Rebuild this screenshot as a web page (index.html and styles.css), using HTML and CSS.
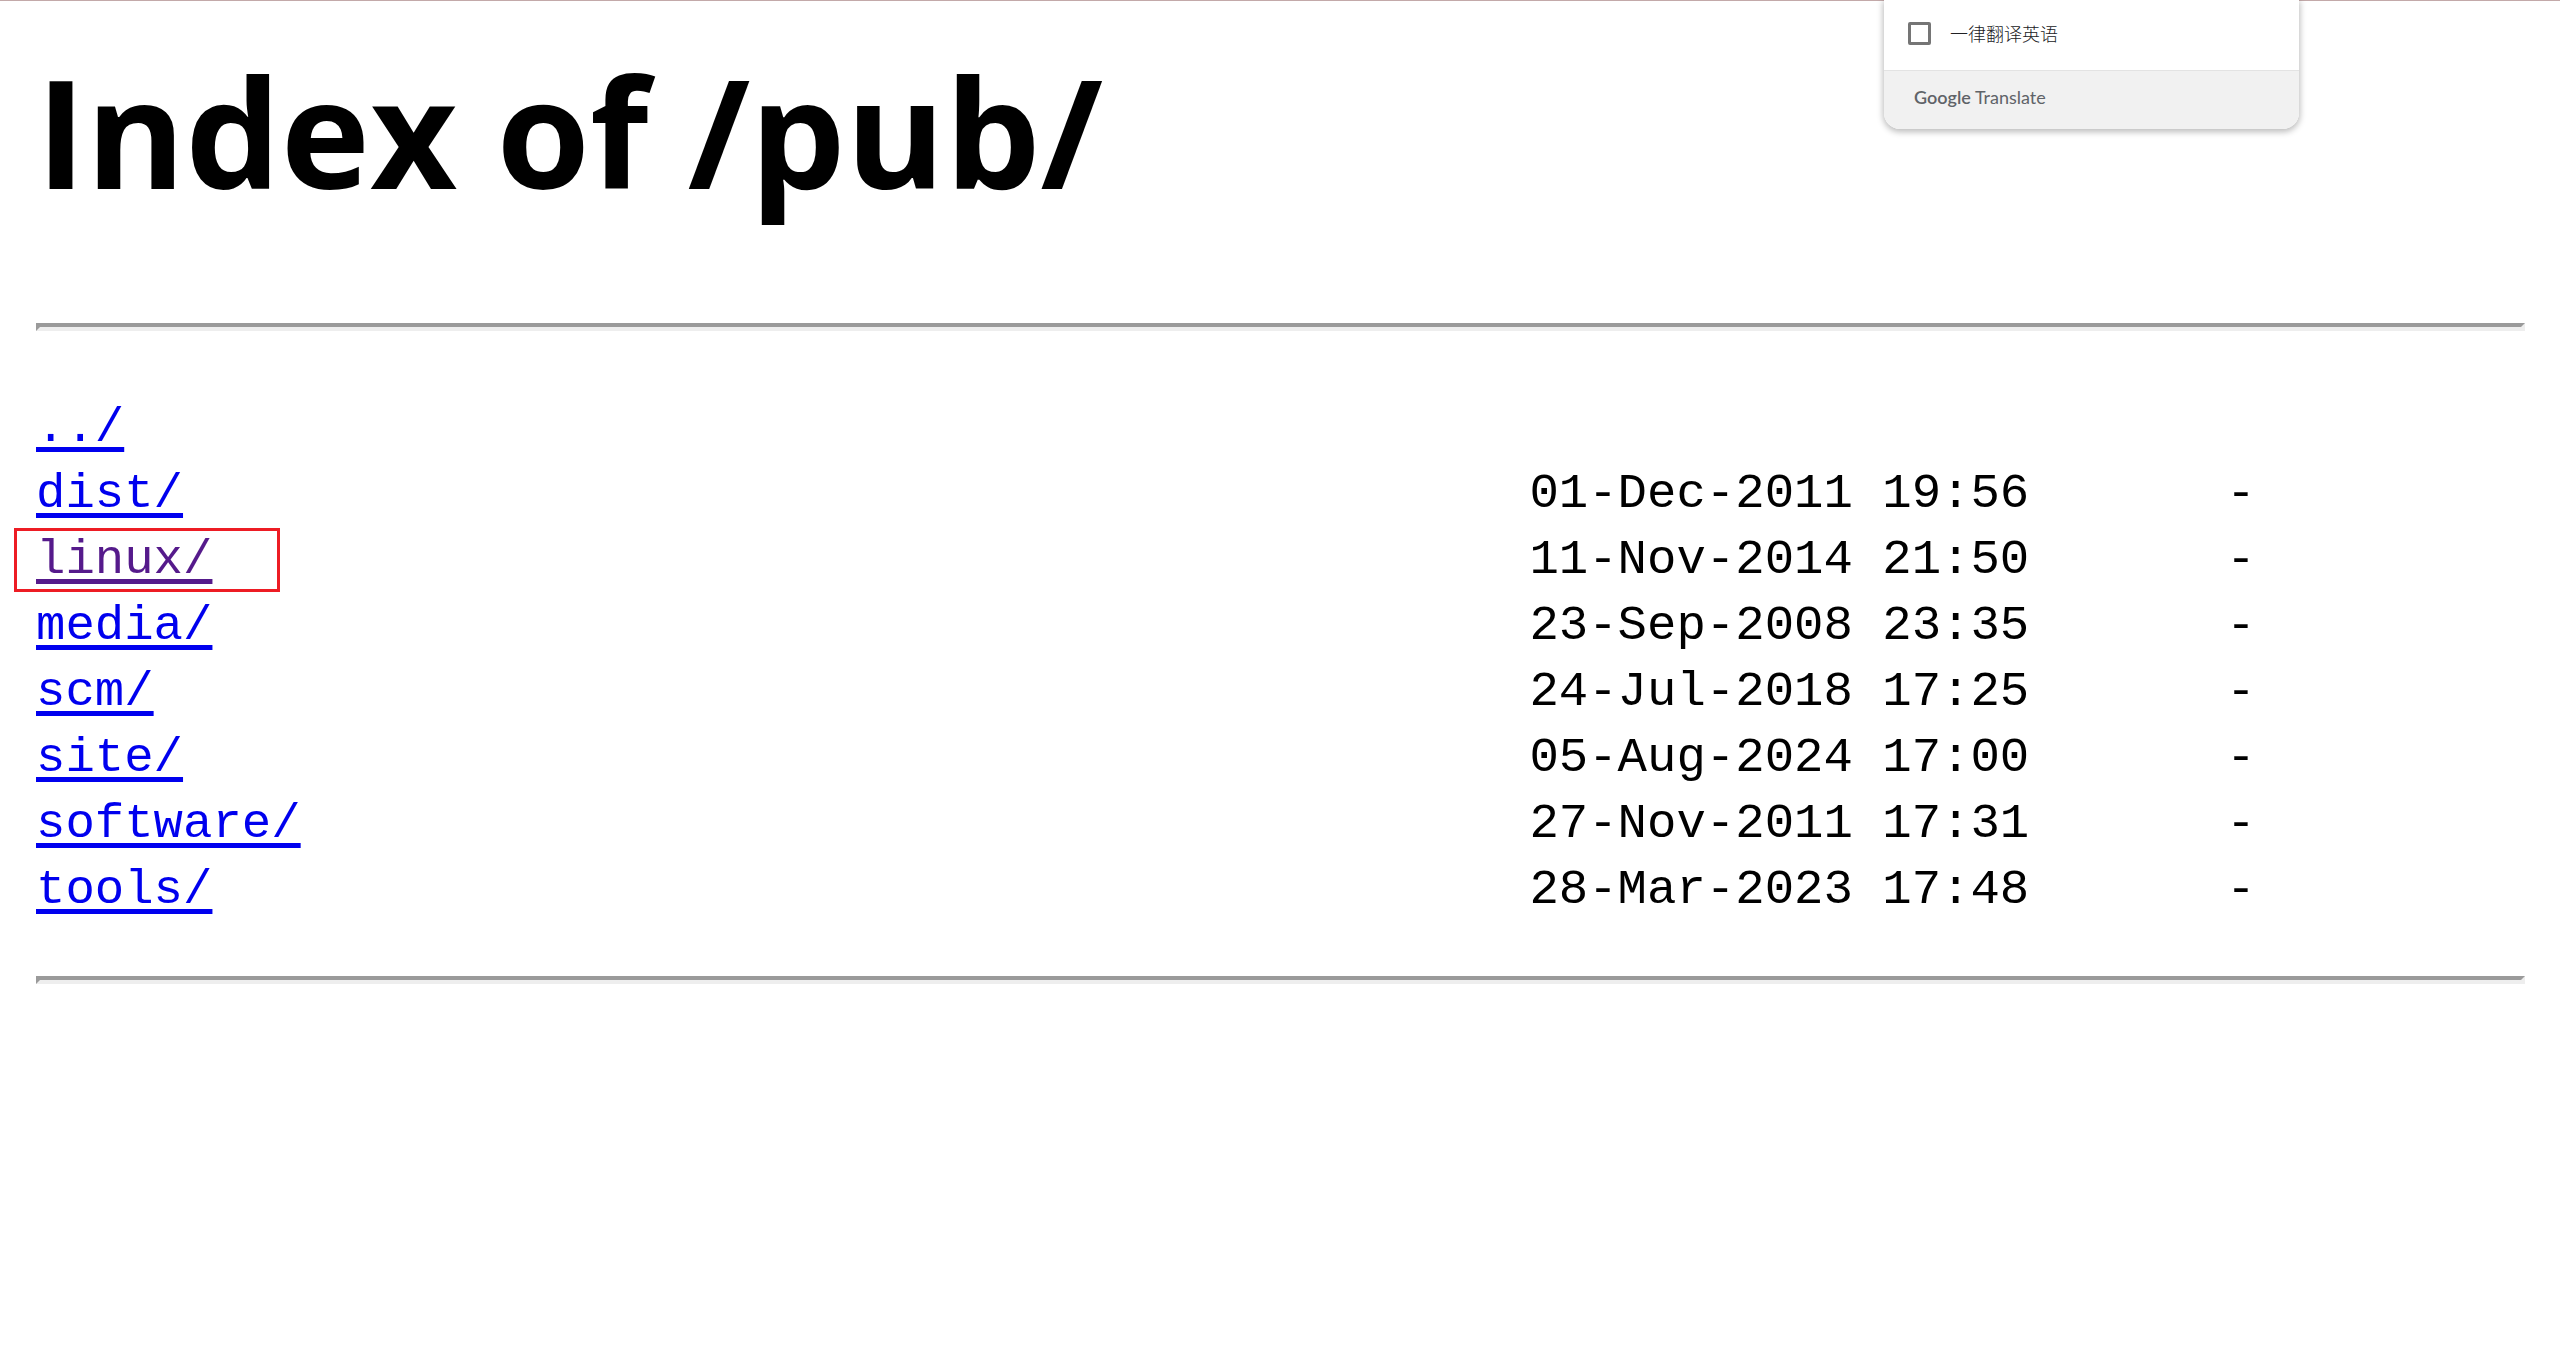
FILE: index.html
```html
<!DOCTYPE html>
<html lang="en">
<head>
<meta charset="utf-8">
<title>Index of /pub/</title>
<link rel="stylesheet" href="styles.css">
</head>
<body>
<main>
<h1>Index of /pub/</h1>
<hr>
<table class="listing">
<colgroup><col class="col-name"><col class="col-date"><col></colgroup>
<tbody>
<tr><td><a href="../">../</a></td><td></td><td></td></tr>
<tr><td><a href="dist/">dist/</a></td><td>01-Dec-2011 19:56</td><td>-</td></tr>
<tr><td><span class="marked"><a class="visited" href="linux/">linux/</a></span></td><td>11-Nov-2014 21:50</td><td>-</td></tr>
<tr><td><a href="media/">media/</a></td><td>23-Sep-2008 23:35</td><td>-</td></tr>
<tr><td><a href="scm/">scm/</a></td><td>24-Jul-2018 17:25</td><td>-</td></tr>
<tr><td><a href="site/">site/</a></td><td>05-Aug-2024 17:00</td><td>-</td></tr>
<tr><td><a href="software/">software/</a></td><td>27-Nov-2011 17:31</td><td>-</td></tr>
<tr><td><a href="tools/">tools/</a></td><td>28-Mar-2023 17:48</td><td>-</td></tr>
</tbody>
</table>
<hr>
</main>
<aside class="translate">
<label class="option" lang="zh-CN"><input type="checkbox">一律翻译英语</label>
<div class="brand"><b>Google</b> Translate</div>
</aside>
</body>
</html>
```

FILE: styles.css
```css
body {
  margin: 0;
  border-top: 1px solid #c3a9a9;
  background: #fff;
  color: #000;
}

main {
  padding: 0 35px 0 36px;
}

h1 {
  margin: 0;
  padding: 26px 0 88px;
  font: bold 151px/208px "Open Sans", "Noto Sans", sans-serif;
}

hr {
  margin: 0;
  border: 4px solid;
  border-color: #9a9a9a #eee #eee #9a9a9a;
}

.listing {
  width: 100%;
  margin: 64px 0 53px;
  table-layout: fixed;
  border-collapse: collapse;
  font: 49px/66px "Liberation Mono", monospace;
}

.col-name {
  width: 60%;
}

.col-date {
  width: 28%;
}

td {
  height: 66px;
  padding: 0;
  white-space: nowrap;
}

a {
  color: #00e;
  text-decoration-thickness: 5px;
  text-underline-offset: 6px;
  text-decoration-skip-ink: none;
}

.visited {
  color: #551a8b;
}

.marked {
  display: block;
  position: relative;
}

.marked::after {
  content: "";
  position: absolute;
  top: 1px;
  left: -22px;
  box-sizing: border-box;
  width: 266px;
  height: 64px;
  border: 3px solid #ed1c24;
  pointer-events: none;
}

.translate {
  position: absolute;
  top: 0;
  right: 261px;
  width: 415px;
  overflow: hidden;
  border-radius: 0 0 16px 16px;
  background: #fff;
  box-shadow: 0 2px 6px 1px #0004;
}

.option {
  display: flex;
  align-items: center;
  gap: 19px;
  height: 66px;
  padding: 0 24px 4px;
  color: #202124;
  font: 300 18px/24px "Noto Sans CJK SC", sans-serif;
}

.option input {
  appearance: none;
  box-sizing: border-box;
  width: 23px;
  height: 23px;
  margin: 0;
  border: 3px solid #757575;
  border-radius: 2px;
}

.brand {
  height: 58px;
  padding-left: 30px;
  border-top: 1px solid #e3e3e3;
  background: #f1f1f1;
  color: #5f6368;
  font: 18px/52px Lato, sans-serif;
}

.brand b {
  font-weight: 600;
}
```
